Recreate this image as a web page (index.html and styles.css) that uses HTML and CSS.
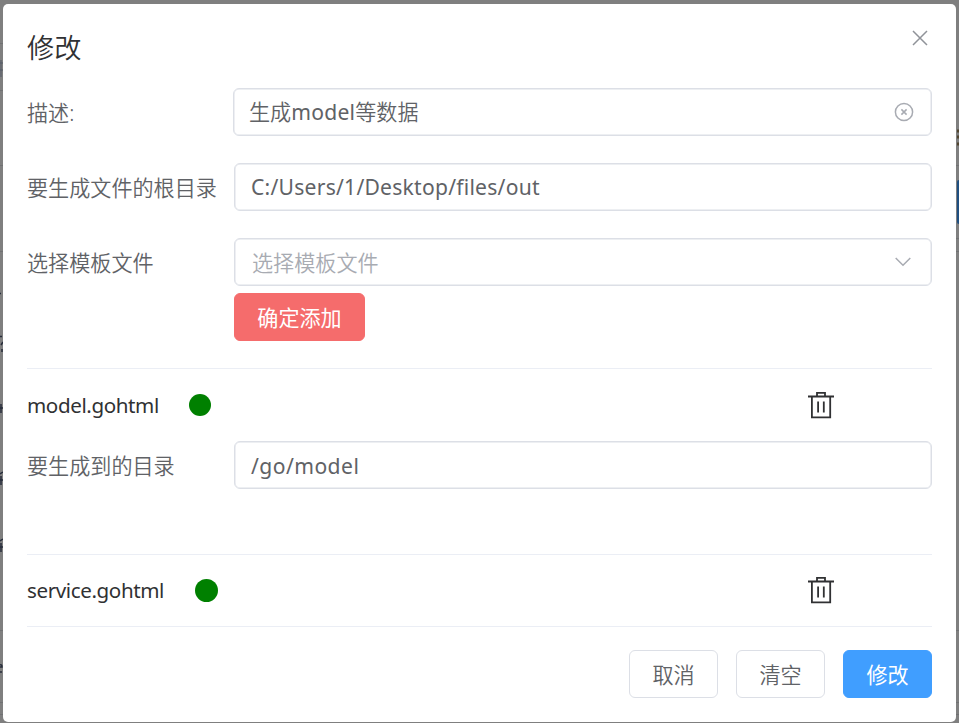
FILE: index.html
```html
<!DOCTYPE html>
<html lang="zh-CN">
<head>
<meta charset="utf-8">
<title>修改</title>
<link rel="stylesheet" href="styles.css">
</head>
<body>
<div class="backdrop" aria-hidden="true">
  <svg width="959" height="723" viewBox="0 0 959 723">
    <path d="M0 43.500H3M0 90.500H3M0 165.500H3M0 251.500H3M956 165.500H959M956 238.500H959M956 251.500H959M0 630.500H3M0 702.500H3M0 714.500H3M956 630.500H959M956 702.500H959M956 714.500H959" stroke="#707173"/>
    <path d="M1 60V77M0 63H3M0 70H3" stroke="#555b66"/>
    <path d="M0 293.500H1M0 336.500H2M1 345L3 342M2 349V352M0 408H3M1 404V413M0 474L3 472M0 480H3M1 476V485M0 541L3 539M0 547H3M1 543V552M0 665Q2 664 2 667H0M0 672H2" stroke="#272d3b" stroke-width="1.500"/>
    <path d="M957 131H959M957 137H959M957 144H959" stroke="#51452f" stroke-width="3"/>
    <path d="M959 180Q957 180 957 182V222Q957 224 959 224Z" fill="#1f4f80"/>
  </svg>
</div>
<main class="dialog" role="dialog">
  <header class="dialog-header">
    <h1>修改</h1>
    <svg class="close" width="16" height="16" viewBox="0 0 16 16"><path d="M1 1L15 15M15 1L1 15"/></svg>
  </header>
  <section class="form">
    <div class="row">
      <span class="label">描述:</span>
      <div class="field field-first"><span>生成<span class="latin word">model</span>等数据</span>
        <svg class="clear" width="20" height="20" viewBox="0 0 20 20"><circle cx="10" cy="10" r="8.600"/><path d="M7.400 7.400L12.600 12.600M12.600 7.400L7.400 12.600"/></svg>
      </div>
    </div>
    <div class="row">
      <span class="label">要生成文件的根目录</span>
      <div class="field"><span class="latin path">C:/Users/1/Desktop/files/out</span></div>
    </div>
    <div class="row">
      <span class="label">选择模板文件</span>
      <div class="field placeholder"><span>选择模板文件</span>
        <svg class="arrow" width="16" height="10" viewBox="0 0 16 10"><path d="M.700 1L8 8.300L15.300 1"/></svg>
      </div>
    </div>
    <button class="btn danger">确定添加</button>
  </section>
  <section class="item">
    <div class="item-head">
      <span class="name">model.gohtml</span><i class="dot"></i>
      <svg class="trash" width="26" height="28" viewBox="0 0 26 28"><path d="M0 5.500H26M3.900 5.500V26.300H22.200V5.500M9 5V1.800H17V5M10.100 10.500V21.500M15.800 10.500V21.500"/></svg>
    </div>
    <div class="row">
      <span class="label">要生成到的目录</span>
      <div class="field"><span class="latin go">/go/model</span></div>
    </div>
  </section>
  <section class="item item-last">
    <div class="item-head">
      <span class="name">service.gohtml</span><i class="dot dot-large"></i>
      <svg class="trash" width="26" height="28" viewBox="0 0 26 28"><path d="M0 5.500H26M3.900 5.500V26.300H22.200V5.500M9 5V1.800H17V5M10.100 10.500V21.500M15.800 10.500V21.500"/></svg>
    </div>
  </section>
  <footer class="footer">
    <button class="btn">取消</button>
    <button class="btn">清空</button>
    <button class="btn primary">修改</button>
  </footer>
</main>
</body>
</html>
```
FILE: styles.css
```css
* { box-sizing: border-box; }
body {
  margin: 0;
  height: 723px;
  overflow: hidden;
  padding: 4px 3px 1px;
  background: #7f7f7f;
  color: #303133;
  font: 350 21.1px/30px "Noto Sans", "Noto Sans CJK SC", sans-serif;
}
svg { display: block; fill: none; flex: none; }
.backdrop { position: absolute; inset: 0; }
.dialog {
  position: relative;
  height: 718px;
  padding: 0 24px;
  background: #fff;
  border-radius: 5px;
}
.dialog-header {
  display: flex;
  justify-content: space-between;
  height: 84px;
}
h1 { margin: 24px 0 0; font-size: 27.2px; line-height: 40px; font-weight: 350; }
.close { margin: 26px 4px 0; stroke: #909399; stroke-width: 1.5; }
.form { height: 280px; }
.row { display: flex; align-items: center; height: 48px; }
.form .row + .row { margin-top: 27px; }
.label { width: 207px; flex: none; padding-top: 1px; color: #606266; white-space: nowrap; }
.field {
  display: flex;
  align-items: center;
  justify-content: space-between;
  flex: 1;
  height: 48px;
  padding: 0 16px;
  border: 1px solid #dcdfe6;
  border-radius: 6px;
  box-shadow: inset 0 0 0 0.5px #dcdfe6;
  color: #606266;
  white-space: nowrap;
}
.field-first { margin-left: -1px; padding: 0 17px 0 15px; }
.clear { stroke: #a8abb2; stroke-width: 1.5; }
.arrow { margin-right: 3px; stroke: #a8abb2; stroke-width: 1.5; }
.placeholder { padding: 0 17px; color: #a8abb2; }
.placeholder span { padding-top: 1px; }
.latin, .name { font-weight: 400; }
.word { letter-spacing: 0.25px; }
.path { letter-spacing: 0.24px; }
.go { letter-spacing: 0.45px; padding-top: 2px; }
.name { font-size: 20.6px; letter-spacing: -0.4px; }
.btn {
  height: 48px;
  padding: 2px 20px 0;
  border: 1px solid #dcdfe6;
  border-radius: 6px;
  background: #fff;
  color: #606266;
  font: inherit;
  white-space: nowrap;
}
.danger {
  display: block;
  width: 131px;
  margin: 7px 0 0 207px;
  background: #f56c6c;
  border-color: #f56c6c;
  color: #fff;
  font-weight: 400;
}
.item { height: 186px; border-top: 1px solid #ebeef5; }
.item-head { display: flex; align-items: center; height: 72px; }
.item-last { height: 73px; border-bottom: 1px solid #ebeef5; }
.item-last .item-head { height: 70px; }
.dot { width: 22px; height: 22px; margin-left: 30px; border-radius: 50%; background: #008000; }
.dot-large { width: 23px; height: 23px; margin-left: 31px; }
.trash { margin: 0 98px 0 auto; stroke: #303133; stroke-width: 1.8; }
.footer { display: flex; justify-content: flex-end; gap: 18px; margin-top: 23px; }
.footer .btn { width: 89px; }
.footer .primary { background: #409eff; border-color: #409eff; color: #fff; font-weight: 400; }
```
